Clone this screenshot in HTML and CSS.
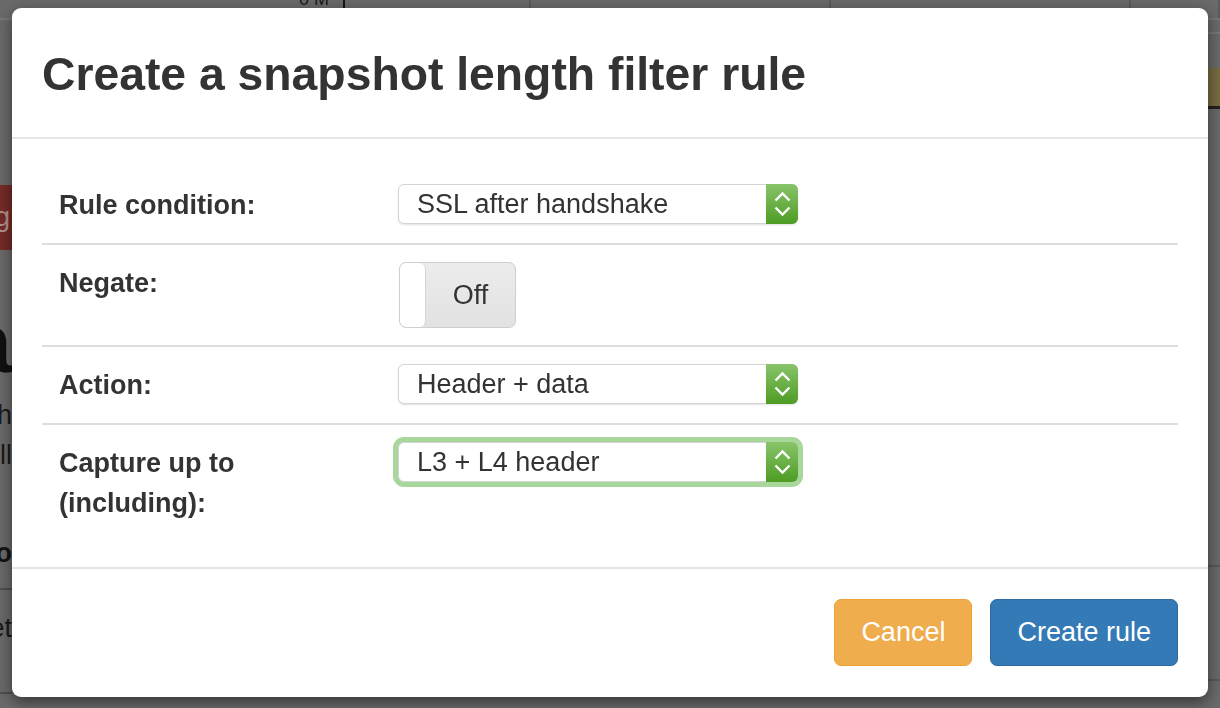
FILE: index.html
```html
<!DOCTYPE html>
<html lang="en">
<head>
  <meta charset="UTF-8" />
  <title>Snapshot length filter</title>
  <link rel="stylesheet" href="styles.css">
</head>
<body>
  <div class="page">
    <div class="page-bar">
      <div class="bar-cell bar-first">0 M</div>
      <div class="bar-cell bar-second"></div>
      <div class="bar-cell bar-third"></div>
      <div class="bar-cell bar-fourth"></div>
      <div class="bar-cell"></div>
    </div>
    <div class="page-cols">
      <div class="side side-left">
        <div class="side-btn">Sending</div>
        <div class="side-heading">Data</div>
        <div class="side-text first">with</div>
        <div class="side-text">will</div>
        <div class="side-sub">Disco</div>
        <div class="side-row">Reset</div>
      </div>
      <div class="side side-right">
        <div class="side-rule"></div>
        <div class="side-avatar"></div>
        <div class="side-rule lower"></div>
        <div class="side-rule bottom"></div>
      </div>
    </div>
  </div>

  <div class="modal">
    <div class="modal-header">
      <h4 class="modal-title">Create a snapshot length filter rule</h4>
    </div>
    <div class="modal-body">
      <table class="form-table">
        <tr>
          <td class="field-label">Rule condition:</td>
          <td>
            <div class="select">
              <span class="select-text">SSL after handshake</span>
              <span class="select-arrow">
                <svg width="32" height="40" viewBox="0 0 32 40"><path d="M9.5 16.5 L16.5 9.5 L23.5 16.5 M9.5 23.5 L16.5 30.5 L23.5 23.5" fill="none" stroke="#fff" stroke-width="2.4"/></svg>
              </span>
            </div>
          </td>
        </tr>
        <tr>
          <td class="field-label">Negate:</td>
          <td>
            <div class="toggle">
              <span class="toggle-knob"></span>
              <span class="toggle-label">Off</span>
            </div>
          </td>
        </tr>
        <tr>
          <td class="field-label">Action:</td>
          <td>
            <div class="select">
              <span class="select-text">Header + data</span>
              <span class="select-arrow">
                <svg width="32" height="40" viewBox="0 0 32 40"><path d="M9.5 16.5 L16.5 9.5 L23.5 16.5 M9.5 23.5 L16.5 30.5 L23.5 23.5" fill="none" stroke="#fff" stroke-width="2.4"/></svg>
              </span>
            </div>
          </td>
        </tr>
        <tr>
          <td class="field-label">Capture up to<br>(including):</td>
          <td>
            <div class="select focused">
              <span class="select-text">L3 + L4 header</span>
              <span class="select-arrow">
                <svg width="32" height="40" viewBox="0 0 32 40"><path d="M9.5 16.5 L16.5 9.5 L23.5 16.5 M9.5 23.5 L16.5 30.5 L23.5 23.5" fill="none" stroke="#fff" stroke-width="2.4"/></svg>
              </span>
            </div>
          </td>
        </tr>
      </table>
    </div>
    <div class="modal-footer">
      <button class="btn btn-warning">Cancel</button>
      <button class="btn btn-primary">Create rule</button>
    </div>
  </div>
</body>
</html>
```

FILE: styles.css
```css
html, body {
  margin: 0;
  padding: 0;
}
body {
  font-family: "Liberation Sans", Arial, sans-serif;
  background: #6a6a6a;
  color: #333;
  width: 1220px;
  height: 708px;
  overflow: hidden;
}

/* page behind the dialog, already dimmed */
.page {
  height: 708px;
  overflow: hidden;
  background: #6a6a6a;
}
.page-bar {
  display: flex;
  height: 32px;
  margin-top: -14px;
  border-bottom: 2px solid #777;
}
.bar-cell {
  flex: 1;
  border-right: 2px solid #5c5c5c;
  font-size: 18px;
  line-height: 26px;
  color: #1a1a1a;
  text-align: right;
  padding-right: 14px;
}
.bar-first { flex: none; width: 329px; border-right-color: #131313; }
.bar-second { flex: none; width: 170px; }
.bar-third { flex: none; width: 284px; }
.bar-fourth { flex: none; width: 284px; }

.page-cols {
  display: flex;
  justify-content: space-between;
}
.side {
  width: 12px;
  overflow: hidden;
  display: flex;
  flex-direction: column;
  align-items: flex-end;
}
.side-left > div {
  white-space: nowrap;
}
.side-btn {
  margin-top: 165px;
  height: 65px;
  line-height: 65px;
  padding: 0 2px 0 20px;
  background: #772b26;
  color: #b39592;
  font-size: 27px;
}
.side-heading {
  margin-top: 52px;
  font-size: 86px;
  font-weight: bold;
  line-height: 80px;
  color: #101010;
}
.side-text {
  font-size: 27px;
  line-height: 40px;
  color: #1a1a1a;
}
.side-text.first { margin-top: 13px; }
.side-sub {
  margin-top: 58px;
  font-size: 27px;
  font-weight: bold;
  line-height: 40px;
  color: #141414;
}
.side-row {
  margin-top: 15px;
  width: 300px;
  text-align: right;
  padding: 18px 0 44px;
  border-top: 2px solid #4e4e4e;
  border-bottom: 2px solid #4e4e4e;
  font-size: 27px;
  line-height: 40px;
  color: #1a1a1a;
}
.side-rule {
  margin-top: 12px;
  width: 12px;
  height: 2px;
  background: #7a7a7a;
}
.side-avatar {
  margin-top: 34px;
  width: 40px;
  height: 38px;
  border-radius: 50% 0 0 50%;
  background: #786c42;
  border-bottom: 3px solid #202020;
}
.side-rule.lower { margin-top: 456px; background: #595959; }
.side-rule.bottom { margin-top: 112px; background: #595959; }

/* dialog */
.modal {
  position: fixed;
  top: 8px;
  left: 12px;
  width: 1196px;
  background: #fff;
  border-radius: 9px;
  box-shadow: 0 5px 15px rgba(0, 0, 0, 0.5);
}
.modal-header {
  padding: 41px 30px 37px;
  border-bottom: 2px solid #e5e5e5;
}
.modal-title {
  margin: 0;
  font-size: 46.3px;
  line-height: 51px;
  font-weight: bold;
  color: #333;
}
.modal-body {
  padding: 28px 30px 26px;
}
.form-table {
  width: 100%;
  border-collapse: collapse;
}
.form-table td {
  padding: 18px 17px;
  vertical-align: top;
  border-top: 2px solid #ddd;
}
.form-table tr:first-child td {
  border-top: none;
}
.field-label {
  width: 305px;
  font-size: 27px;
  line-height: 40px;
  font-weight: bold;
}

.select {
  display: flex;
  width: 400px;
  height: 40px;
  margin-top: -1px;
  box-sizing: border-box;
  border: 1px solid #d4d4d4;
  border-radius: 6px;
  box-shadow: 0 1px 2px rgba(0, 0, 0, 0.12);
  background: #fff;
}
.select.focused {
  box-shadow: 0 0 0 5px #a8d79b;
}
.select-text {
  flex: 1;
  padding-left: 18px;
  font-size: 27px;
  line-height: 38px;
  color: #333;
}
.select-arrow {
  width: 32px;
  margin: -1px -1px -1px 0;
  border-radius: 0 6px 6px 0;
  background: linear-gradient(#88c46a, #4e9c24);
}
.select-arrow svg {
  display: block;
}

.toggle {
  display: flex;
  width: 117px;
  height: 66px;
  margin: -1px 0 -1px 1px;
  box-sizing: border-box;
  border: 1px solid #cfcfcf;
  border-radius: 7px;
  background: linear-gradient(#ececec, #e2e2e2);
  overflow: hidden;
}
.toggle-knob {
  width: 25px;
  background: #fff;
  border-right: 1px solid #d6d6d6;
  border-radius: 6px;
}
.toggle-label {
  flex: 1;
  text-align: center;
  font-size: 27px;
  line-height: 64px;
  color: #333;
}

.modal-footer {
  display: flex;
  justify-content: flex-end;
  gap: 18px;
  padding: 30px 30px 31px;
  border-top: 2px solid #e5e5e5;
}
.btn {
  font-family: "Liberation Sans", Arial, sans-serif;
  font-size: 27px;
  line-height: 39px;
  padding: 13px 26px;
  border: 1px solid transparent;
  border-radius: 7px;
  color: #fff;
}
.btn-warning {
  background: #f0ad4e;
  border-color: #eea236;
}
.btn-primary {
  background: #337ab7;
  border-color: #2e6da4;
}
```
